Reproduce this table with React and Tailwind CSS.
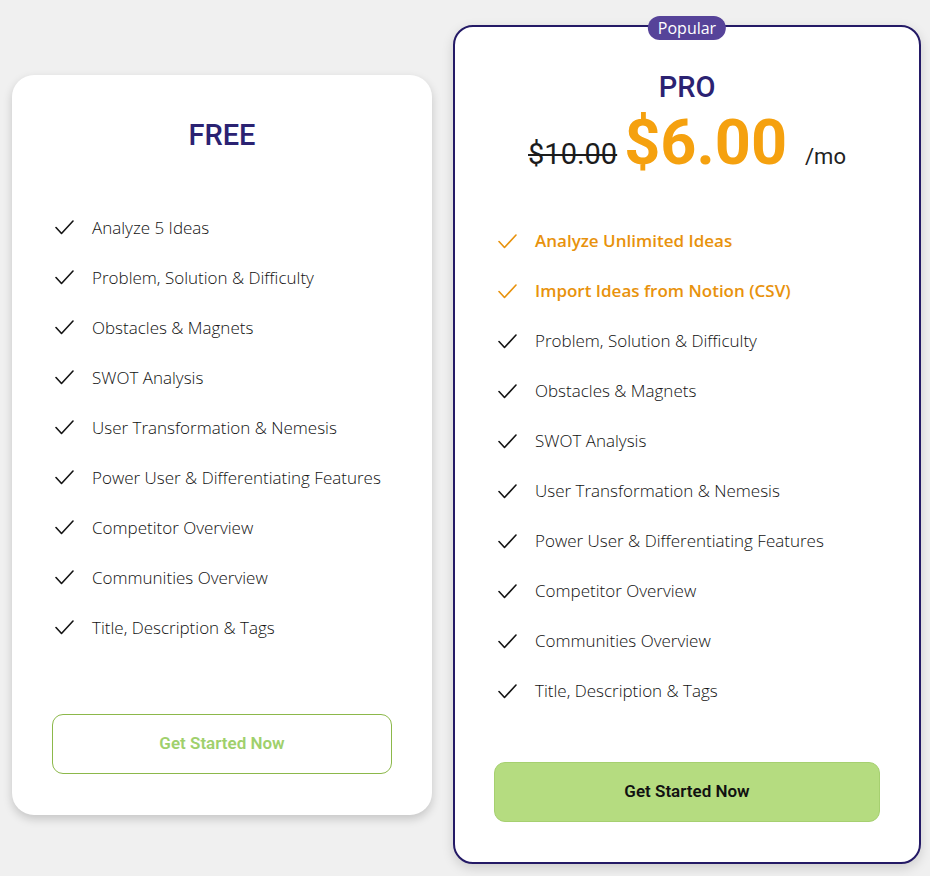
import React from "react";

const Check = ({ color = "#111" }) => (
  <svg width="19" height="15" viewBox="0 0 19 15" fill="none" className="shrink-0">
    <polyline points="1,7.5 6.5,13.5 18,1" stroke={color} strokeWidth="1.6" fill="none" strokeLinecap="round" strokeLinejoin="round" />
  </svg>
);

const Row = ({ children, hi }) => (
  <li className="h-[50px] flex items-center">
    <Check color={hi ? "#e8920c" : "#141414"} />
    <span
      className={
        hi
          ? "ml-[18px] text-[17px] font-semibold text-[#e8920c]"
          : "ml-[18px] text-[17px] font-light text-[#111]"
      }
    >
      {children}
    </span>
  </li>
);

const common = [
  "Problem, Solution & Difficulty",
  "Obstacles & Magnets",
  "SWOT Analysis",
  "User Transformation & Nemesis",
  "Power User & Differentiating Features",
  "Competitor Overview",
  "Communities Overview",
  "Title, Description & Tags",
];

const head = { fontFamily: "Roboto, 'DejaVu Sans', sans-serif" };
const body = { fontFamily: "'Open Sans', 'Noto Sans', sans-serif" };

export default function App() {
  return (
    <div className="w-[930px] h-[876px] bg-[#f0f0f0] flex items-center pl-[12px] pt-[13px]" style={body}>
      {/* FREE */}
      <div className="w-[420px] h-[740px] bg-white rounded-[22px] shadow-[0_4px_10px_rgba(0,0,0,0.18)] px-[40px] pt-[44px] pb-[41px] flex flex-col">
        <h2 className="text-center text-[29px] leading-[32px] font-medium text-[#2b2272]" style={head}>FREE</h2>
        <ul className="mt-[52px] pl-[3px]">
          <Row>Analyze 5 Ideas</Row>
          {common.map((t) => (
            <Row key={t}>{t}</Row>
          ))}
        </ul>
        <button
          className="mt-auto h-[60px] w-full rounded-[11px] border border-[#8cb84a] text-[#9fd06c] text-[17px] font-semibold bg-white"
          style={head}
        >
          Get Started Now
        </button>
      </div>

      {/* PRO */}
      <div className="relative ml-[21px] w-[468px] h-[839px] bg-white rounded-[20px] border-2 border-[#241a66] shadow-[0_4px_12px_rgba(0,0,0,0.15)] px-[39px] pt-[44px] pb-[40px] flex flex-col">
        <div className="absolute left-1/2 -translate-x-1/2 -top-[11px] h-[24px] px-[10px] rounded-full bg-[#564399] text-white text-[16px] leading-[24px] flex items-center">
          Popular
        </div>
        <h2 className="text-center text-[29px] leading-[32px] font-medium text-[#2b2272]" style={head}>PRO</h2>
        <div className="mt-[6px] flex items-baseline justify-center" style={head}>
          <span className="text-[29px] text-[#1c1c1c] line-through decoration-[2px]">$10.00</span>
          <span className="ml-[7px] text-[63px] leading-[68px] font-bold text-[#f5a10f]">$6.00</span>
          <span className="ml-[18px] text-[22px] text-[#222]">/mo</span>
        </div>
        <ul className="mt-[39px] pl-[4px]">
          <Row hi>Analyze Unlimited Ideas</Row>
          <Row hi>Import Ideas from Notion (CSV)</Row>
          {common.map((t) => (
            <Row key={t}>{t}</Row>
          ))}
        </ul>
        <button
          className="mt-auto h-[60px] w-full rounded-[11px] bg-[#b5dc80] border border-[#a6d070] text-[#111] text-[17px] font-semibold"
          style={head}
        >
          Get Started Now
        </button>
      </div>
    </div>
  );
}
